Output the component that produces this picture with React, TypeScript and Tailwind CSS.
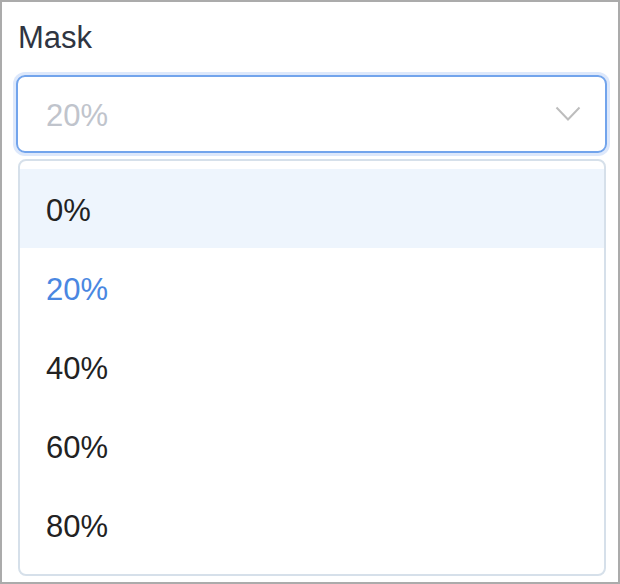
import React from "react";

const items = ["0%", "20%", "40%", "60%", "80%"];

export default function App() {
  return (
    <div
      className="w-[620px] h-[584px] border-2 border-[#ababab] bg-white relative"
      style={{ fontFamily: '"Liberation Sans", Arial, sans-serif' }}
    >
      <div className="pl-[14px] pt-[16px]">
        <div className="text-[31px] leading-[40px] text-[#2f3542] pl-[2px]">Mask</div>
        <div className="mt-[17px] w-[591px] h-[78px] rounded-[9px] border-2 border-[#72a4ec] shadow-[0_0_0_3px_#dde8fb] flex items-center justify-between pl-[28px] pr-[24px]">
          <span className="text-[31px] text-[#c0c4cc] pt-[4px]">20%</span>
          <svg width="26" height="16" viewBox="0 0 26 16" fill="none">
            <path d="M1.5 1.5 L13 13.5 L24.5 1.5" stroke="#bdbdbd" strokeWidth="2" />
          </svg>
        </div>
        <div className="mt-[6px] ml-[2px] w-[588px] h-[417px] rounded-[8px] border-2 border-[#d6e0ea] py-[8px] flex flex-col">
          {items.map((it, i) => (
            <div
              key={it}
              className={`h-[79px] flex items-center pl-[26px] pt-[5px] text-[31px] ${
                i === 0 ? "bg-[#eef5fd] text-[#222]" : i === 1 ? "text-[#4a87e1]" : "text-[#222]"
              }`}
            >
              {it}
            </div>
          ))}
        </div>
      </div>
    </div>
  );
}
